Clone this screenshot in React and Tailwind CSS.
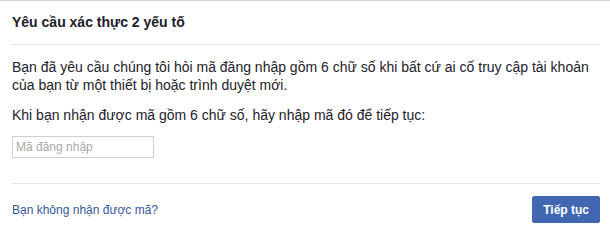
import React from 'react';

const font = { fontFamily: '"Liberation Sans", Arial, sans-serif' };

export default function App() {
  return (
    <div style={font} className="w-[610px] h-[235px] bg-white border-t border-[#d3d3d3] text-[#1d2129] overflow-hidden">
      <div className="ml-3 mr-[10px] pt-3 pb-[13px] border-b border-[#e5e5e5]">
        <h2 className="text-[14px] leading-[18px] font-bold">Yêu cầu xác thực 2 yếu tố</h2>
      </div>
      <div className="ml-3 mr-[10px] pt-[13px] pb-[25px] border-b border-[#e5e5e5]">
        <p className="text-[14px] leading-[18px] mb-3">
          Bạn đã yêu cầu chúng tôi hỏi mã đăng nhập gồm 6 chữ số khi bất cứ ai cố truy cập tài khoản của bạn từ một thiết bị hoặc trình duyệt mới.
        </p>
        <p className="text-[14px] leading-[18px] mb-3">Khi bạn nhận được mã gồm 6 chữ số, hãy nhập mã đó để tiếp tục:</p>
        <input
          type="text"
          placeholder="Mã đăng nhập"
          className="block w-[142px] h-[22px] border border-[#ccd0d5] px-[3px] text-[12px] text-[#1d2129] placeholder:text-[#a9a9a9] outline-none"
          style={font}
        />
      </div>
      <div className="ml-3 mr-[10px] pt-3 flex items-center justify-between">
        <a href="#" className="text-[12px] text-[#365899]">Bạn không nhận được mã?</a>
        <button className="h-[27px] px-[10px] bg-[#4267b2] border border-[#4267b2] rounded-[2px] text-white text-[12px] font-bold">
          Tiếp tục
        </button>
      </div>
    </div>
  );
}
